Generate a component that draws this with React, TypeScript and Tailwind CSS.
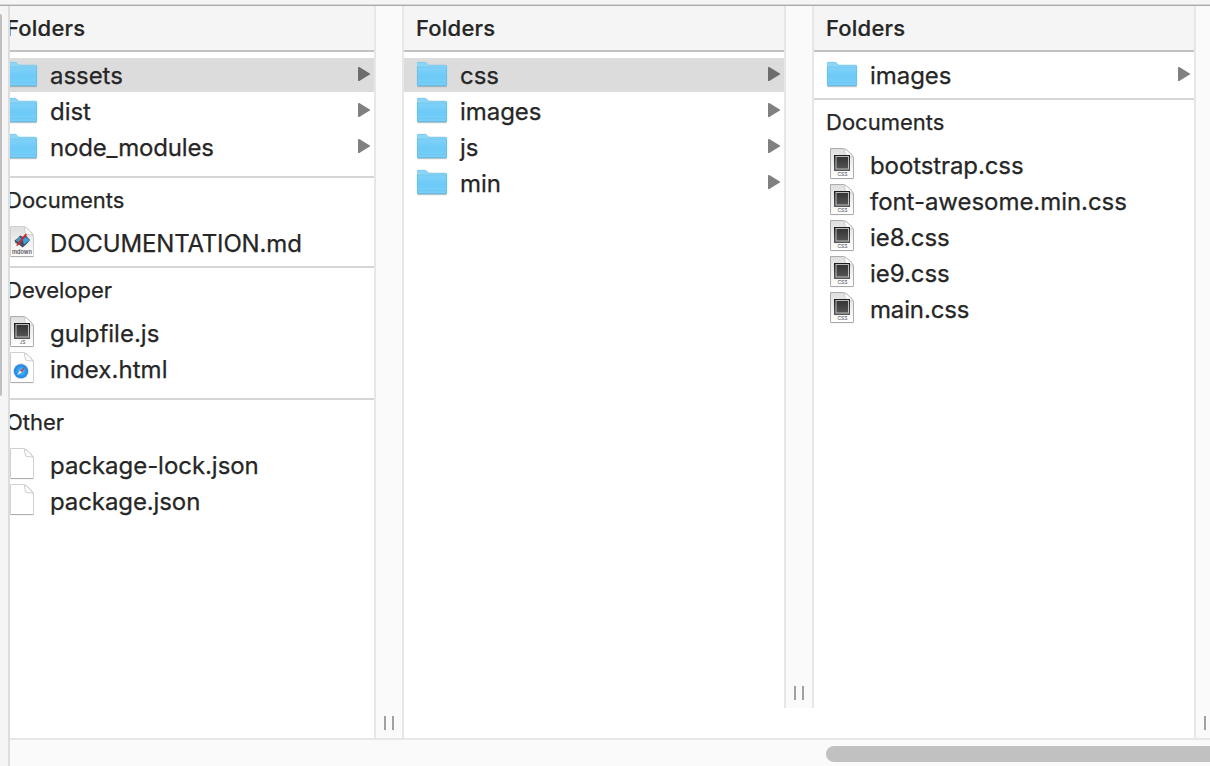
import React from "react";

type Kind = "folder" | "css" | "js" | "md" | "html" | "blank";
type Item = { name: string; kind: Kind; selected?: boolean; tracking?: string };
type Group = { title: string; items: Item[] };

function FolderIcon() {
  return (
    <svg width="32" height="28" viewBox="0 0 32 28" className="block">
      <defs>
        <linearGradient id="folderFront" x1="0" y1="0" x2="0" y2="1">
          <stop offset="0" stopColor="#80d2f8" />
          <stop offset="0.5" stopColor="#6ccaf8" />
          <stop offset="1" stopColor="#7cd1f9" />
        </linearGradient>
      </defs>
      <rect x="1" y="24.3" width="30" height="2" rx="1" fill="#777777" opacity="0.35" />
      <path d="M1 2.5Q1 1 2.5 1H9.2Q10.2 1 11.2 2.5Q12.2 4 13.5 4H29.5Q31 4 31 5.5V24Q31 25 30 25H2Q1 25 1 24Z" fill="#8cd7f8" />
      <path d="M1 2.5Q1 1.3 2.5 1.3H9.2Q10.2 1.3 11.2 2.7Q12.2 4.2 13.5 4.2H29.5Q31 4.2 31 5.5" fill="none" stroke="#79c4e6" strokeWidth="0.7" />
      <path d="M1 6H31V24Q31 25 30 25H2Q1 25 1 24Z" fill="url(#folderFront)" />
      <path d="M1.4 5.5V24M30.6 5.5V24" stroke="#64bbe3" strokeWidth="0.8" />
      <path d="M1.5 6H30.5" stroke="#72c3e8" strokeWidth="0.8" />
      <path d="M2 21.7H30" stroke="#66c0eb" strokeWidth="0.6" />
      <path d="M1.5 24.8H30.5" stroke="#58aad0" strokeWidth="0.8" />
    </svg>
  );
}

function FileIcon({ kind }: { kind: Kind }) {
  const code = kind === "css" || kind === "js";
  return (
    <svg width="26" height="34" viewBox="0 0 26 34" className="block">
      <defs>
        <linearGradient id="paper" x1="0" y1="0" x2="0" y2="1">
          <stop offset="0" stopColor="#dedede" />
          <stop offset="0.65" stopColor="#f4f4f4" />
          <stop offset="1" stopColor="#ffffff" />
        </linearGradient>
        <linearGradient id="chip" x1="0" y1="0" x2="0" y2="1">
          <stop offset="0" stopColor="#333333" />
          <stop offset="1" stopColor="#555555" />
        </linearGradient>
        <linearGradient id="frame" x1="0" y1="0" x2="0" y2="1">
          <stop offset="0" stopColor="#1c1c1c" />
          <stop offset="1" stopColor="#5a5a5a" />
        </linearGradient>
        <radialGradient id="compass">
          <stop offset="0" stopColor="#51c8fa" />
          <stop offset="1" stopColor="#1c7fe3" />
        </radialGradient>
      </defs>
      <path
        d="M1.5 1.5H14.5C17 1.5 24.5 8.5 24.5 11V30.5Q24.5 31.5 23.5 31.5H2Q1.5 31.5 1.5 30.5V2Q1.5 1.5 1.5 1.5Z"
        fill={code || kind === "md" ? "url(#paper)" : "#ffffff"}
        stroke={code ? "#acacac" : "#d0d0d0"}
        strokeWidth="1"
      />
      <path d="M1.5 31.6H24.5" stroke="#a9a9a9" strokeWidth="1" />
      <path d="M15.2 2L16.6 9.2L24 10.2C22 7 18.5 3.2 15.2 2Z" fill="#fbfbfb" stroke="#c4c4c4" strokeWidth="0.8" />
      {code && (
        <>
          <rect x="5" y="8" width="16" height="16" fill="url(#frame)" />
          <rect x="7" y="9.5" width="12.5" height="12.5" fill="url(#chip)" stroke="#cccccc" strokeWidth="0.9" />
          <text x="13.5" y="29" textAnchor="middle" fontSize="5" fontFamily="Inter, sans-serif" fill="#4d4d4d">
            {kind === "css" ? "CSS" : "JS"}
          </text>
        </>
      )}
      {kind === "md" && (
        <>
          <path d="M5.5 15.5L9 13L11 10.5L14.5 12L17 10.5L21 15L19 17.5L16 20.5L13.5 22.5L10.5 20L6.5 18Z" fill="#40515f" />
          <path d="M13.5 14L17 12L20.5 15.2L15 19.5Z" fill="#38a4dc" />
          <path d="M6.5 15.8L10.5 11.8L13 14L9.5 17Z" fill="#4995c6" />
          <path d="M7 20.5L16.5 8.5L18 9.8L9 20.8Z" fill="#da2430" />
          <text x="13" y="29" textAnchor="middle" fontSize="5.6" fontWeight="600" fontFamily="Inter, sans-serif" fill="#555555">
            mdown
          </text>
        </>
      )}
      {kind === "html" && (
        <>
          <circle cx="12" cy="20.3" r="8" fill="#d8dde1" />
          <circle cx="12" cy="20.3" r="7" fill="url(#compass)" />
          <path d="M16 16.3L12.8 21.2L11 19.4Z" fill="#e33a2e" />
          <path d="M8 24.3L12.8 21.2L11 19.4Z" fill="#f0f0f0" />
        </>
      )}
    </svg>
  );
}

function Row({ item }: { item: Item }) {
  const folder = item.kind === "folder";
  return (
    <div className={`mb-0.5 flex h-[34px] w-[380px] items-center pr-[3px] ${item.selected ? "bg-[#dcdcdc]" : ""}`}>
      <div className={`w-14 shrink-0 ${folder ? "pl-3" : "pb-0.5 pl-[15px]"}`}>
        {folder ? <FolderIcon /> : <FileIcon kind={item.kind} />}
      </div>
      <span className={`grow whitespace-nowrap pt-0.5 text-[24px] leading-[34px] [-webkit-text-stroke:0.25px_#262626] ${item.tracking ?? "tracking-[-0.05px]"}`}>
        {item.name}
      </span>
      {folder && (
        <svg width="13" height="16" viewBox="0 0 13 16" className="mb-0.5 shrink-0">
          <path d="M0 1.8Q0 0.6 1.3 1.1L11.8 7.4Q12.6 8 11.8 8.6L1.3 14.9Q0 15.4 0 14.2Z" fill={item.selected ? "#6d6d6d" : "#808080"} />
        </svg>
      )}
    </div>
  );
}

function Column({ groups, clipped }: { groups: Group[]; clipped?: boolean }) {
  return (
    <section className={`shrink-0 overflow-hidden bg-white ${clipped ? "w-[364px]" : "w-[380px]"}`}>
      <div className={`w-[380px] ${clipped ? "-ml-4" : ""}`}>
        {groups.map((g, i) => (
          <div key={g.title}>
            {i === 0 ? (
              <h2 className="mb-1.5 h-[46px] border-b-2 border-[#c1c1c1] bg-[#f5f5f5] pl-3 text-[22px] font-medium leading-[44px] tracking-[0.2px] [-webkit-text-stroke:0.2px_#262626]">
                {g.title}
              </h2>
            ) : (
              <h2 className="mb-0.5 h-12 border-t-2 border-[#d5d5d5] pl-3 text-[22px] leading-[44px] [-webkit-text-stroke:0.25px_#262626]">{g.title}</h2>
            )}
            {g.items.map((it) => (
              <Row key={it.name} item={it} />
            ))}
            {g.items.length > 1 ? <div className="h-2.5" /> : <div className="h-1" />}
          </div>
        ))}
      </div>
    </section>
  );
}

function Grip() {
  return <div className="h-3.5 w-2.5 border-x-2 border-[#a0a0a0]" />;
}

function Splitter({ short }: { short?: boolean }) {
  return (
    <div
      className={`flex w-[30px] shrink-0 items-end justify-center border-x-2 border-[#e7e7e7] bg-[#fafafa] pb-2 ${short ? "h-[702px]" : "h-[732px]"}`}
    >
      <Grip />
    </div>
  );
}

const first: Group[] = [
  {
    title: "Folders",
    items: [
      { name: "assets", kind: "folder", selected: true },
      { name: "dist", kind: "folder" },
      { name: "node_modules", kind: "folder", tracking: "tracking-[-0.17px]" },
    ],
  },
  { title: "Documents", items: [{ name: "DOCUMENTATION.md", kind: "md", tracking: "tracking-[-0.16px]" }] },
  {
    title: "Developer",
    items: [
      { name: "gulpfile.js", kind: "js", tracking: "tracking-normal" },
      { name: "index.html", kind: "html", tracking: "tracking-[0.05px]" },
    ],
  },
  {
    title: "Other",
    items: [
      { name: "package-lock.json", kind: "blank" },
      { name: "package.json", kind: "blank", tracking: "tracking-[-0.1px]" },
    ],
  },
];

const second: Group[] = [
  {
    title: "Folders",
    items: [
      { name: "css", kind: "folder", selected: true },
      { name: "images", kind: "folder" },
      { name: "js", kind: "folder" },
      { name: "min", kind: "folder" },
    ],
  },
];

const third: Group[] = [
  { title: "Folders", items: [{ name: "images", kind: "folder" }] },
  {
    title: "Documents",
    items: [
      { name: "bootstrap.css", kind: "css", tracking: "tracking-[-0.1px]" },
      { name: "font-awesome.min.css", kind: "css" },
      { name: "ie8.css", kind: "css" },
      { name: "ie9.css", kind: "css" },
      { name: "main.css", kind: "css", tracking: "tracking-[-0.15px]" },
    ],
  },
];

export default function App() {
  return (
    <div className="flex h-[766px] w-[1210px] flex-col overflow-hidden bg-white font-['Inter',sans-serif] text-[#262626]">
      <div className="h-1.5 shrink-0 border-b border-[#aaaaaa] bg-[#f5f5f5] pt-1">
        <div className="h-px bg-[#d8d8d8]" />
      </div>
      <div className="flex grow">
        <div className="w-2.5 shrink-0 border-r-2 border-[#dddddd] bg-[#f5f5f5] pt-2">
          <div className="h-[382px] w-0.5 rounded-r-sm bg-[#bfbfbf]" />
        </div>
        <div className="flex w-[1200px] flex-col">
          <main className="flex h-[732px] overflow-hidden">
            <Column groups={first} clipped />
            <Splitter />
            <Column groups={second} />
            <Splitter short />
            <Column groups={third} />
            <Splitter />
          </main>
          <div className="grow border-t-2 border-[#e7e7e7] bg-[#fafafa] pl-[816px] pt-1.5">
            <div className="h-4 rounded-l-full bg-[#c1c1c1]" />
          </div>
        </div>
      </div>
    </div>
  );
}
